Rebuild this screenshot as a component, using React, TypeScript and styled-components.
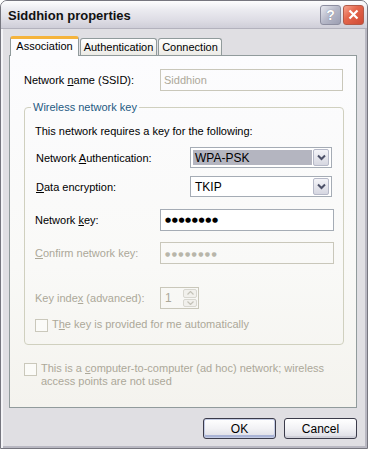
import React from "react";
import styled, { createGlobalStyle, css } from "styled-components";

const Global = createGlobalStyle`
  html, body {
    margin: 0;
    padding: 0;
    background: #ffffff;
  }
  * {
    box-sizing: border-box;
  }
`;

const FONT = `"Liberation Sans", Arial, sans-serif`;
const DISABLED = "#aca899";

const Window = styled.div`
  width: 368px;
  height: 449px;
  background: #e0dfe3;
  border: 1px solid #76767f;
  border-radius: 7px 7px 0 0;
  box-shadow: inset 2px 0 0 #f4f4f7, inset -2px 0 0 #b9b8c2, inset 0 -2px 0 #b9b8c2;
  display: flex;
  flex-direction: column;
  overflow: hidden;
  font-family: ${FONT};
  font-size: 11px;
  color: #000;
`;

const TitleBar = styled.div`
  height: 28px;
  flex: none;
  display: flex;
  align-items: center;
  padding: 0 3px 0 7px;
  background: linear-gradient(#fdfdfe 0%, #ececf1 30%, #dedde5 70%, #cfced8 100%);
  border-bottom: 1px solid #b3b2bd;
`;

const Title = styled.div`
  flex: 1;
  font-family: ${FONT};
  font-weight: bold;
  font-size: 13px;
  color: #111;
  padding-top: 1px;
`;

const CaptionButton = styled.div<{ $close?: boolean }>`
  width: 21px;
  height: 20px;
  margin-left: 2px;
  border-radius: 3px;
  border: 1px solid ${(p) => (p.$close ? "#b25a48" : "#8d8ea0")};
  display: flex;
  align-items: center;
  justify-content: center;
  color: #fff;
  ${(p) =>
    p.$close
      ? css`
          background: linear-gradient(135deg, #f7a48f 0%, #e4664c 40%, #cf4a35 100%);
        `
      : css`
          background: linear-gradient(135deg, #e8e9f0 0%, #b6b8c8 50%, #9c9eb2 100%);
          font-weight: bold;
          font-size: 14px;
          text-shadow: 0 0 1px #6c6e80;
        `}
`;

const Body = styled.div`
  flex: 1;
  display: flex;
  flex-direction: column;
  padding: 7px 10px 0 8px;
`;

const TabStrip = styled.div`
  display: flex;
  align-items: flex-end;
  padding-left: 1px;
  height: 19px;
`;

const Tab = styled.div<{ $w: number; $active?: boolean }>`
  width: ${(p) => p.$w}px;
  display: flex;
  align-items: center;
  justify-content: center;
  border: 1px solid #919b9c;
  border-bottom: none;
  border-radius: 3px 3px 0 0;
  margin-right: 1px;
  ${(p) =>
    p.$active
      ? css`
          height: 20px;
          margin-bottom: -1px;
          padding-bottom: 3px;
          background: #fcfcfe;
          border-top: 3px solid #f5b43c;
          position: relative;
          z-index: 1;
        `
      : css`
          height: 17px;
          background: linear-gradient(#ffffff, #ecebe6);
        `}
`;

const Panel = styled.div`
  height: 353px;
  border: 1px solid #919b9c;
  background: linear-gradient(#fcfcfe 0%, #f9f9f7 60%, #f4f3ee 100%);
  padding: 13px 13px 0 14px;
  display: flex;
  flex-direction: column;
`;

const Row = styled.div<{ $top?: number }>`
  display: flex;
  align-items: center;
  margin-top: ${(p) => p.$top ?? 0}px;
`;

const Label = styled.div<{ $disabled?: boolean; $indent?: number }>`
  flex: 1;
  padding-left: ${(p) => p.$indent ?? 0}px;
  color: ${(p) => (p.$disabled ? DISABLED : "#000")};
  white-space: nowrap;
`;

const U = styled.span`
  text-decoration: underline;
  text-underline-offset: 1px;
`;

const Field = styled.div<{ $w: number; $disabled?: boolean; $h?: number }>`
  width: ${(p) => p.$w}px;
  height: ${(p) => p.$h ?? 22}px;
  border: 1px solid ${(p) => (p.$disabled ? "#c9c7ba" : "#a5acb5")};
  background: ${(p) => (p.$disabled ? "transparent" : "#ffffff")};
  color: ${(p) => (p.$disabled ? DISABLED : "#000")};
  display: flex;
  align-items: center;
  padding-left: 3px;
`;

const Dots = styled.span<{ $disabled?: boolean }>`
  font-family: "DejaVu Sans", sans-serif;
  font-size: ${(p) => (p.$disabled ? 6 : 7)}px;
  letter-spacing: ${(p) => (p.$disabled ? 1.4 : 0.6)}px;
  color: ${(p) => (p.$disabled ? "#b8b6aa" : "#000")};
  padding-left: 1px;
`;

const Group = styled.fieldset`
  margin: 10px 0 0 0;
  padding: 0 9px 12px 10px;
  border: 1px solid #d0d0bf;
  border-radius: 4px;
  width: 320px;
`;

const Legend = styled.legend`
  color: #1f5a82;
  padding: 0 2px;
  margin-left: -4px;
  line-height: 13px;
`;

const Text = styled.div<{ $top?: number }>`
  margin-top: ${(p) => p.$top ?? 0}px;
  line-height: 13px;
  padding-left: 0;
`;

const Select = styled.div<{ $w: number }>`
  width: ${(p) => p.$w}px;
  height: 21px;
  margin-right: 2px;
  border: 1px solid #a5acb5;
  background: #fff;
  display: flex;
  padding: 2px;
`;

const SelectValue = styled.div<{ $selected?: boolean }>`
  flex: 1;
  display: flex;
  align-items: center;
  padding-left: 2px;
  font-size: 12px;
  background: ${(p) => (p.$selected ? "#b4b5c0" : "transparent")};
  color: #000;
`;

const DropButton = styled.div`
  width: 16px;
  margin-left: 1px;
  margin-top: -1px;
  margin-bottom: -1px;
  border: 1px solid #b6b9c8;
  border-radius: 2px;
  background: linear-gradient(#f4f4f8, #d6d7e1);
  display: flex;
  align-items: center;
  justify-content: center;
`;

const Spin = styled.div`
  width: 39px;
  height: 22px;
  border: 1px solid #c9c7ba;
  display: flex;
  align-items: stretch;
  color: ${DISABLED};
`;

const SpinText = styled.div`
  flex: 1;
  display: flex;
  align-items: center;
  padding-left: 4px;
  font-size: 12px;
`;

const SpinButtons = styled.div`
  width: 15px;
  display: flex;
  flex-direction: column;
  padding: 1px 1px 1px 0;
  gap: 1px;
`;

const SpinHalf = styled.div`
  flex: 1;
  border: 1px solid #d8d7d0;
  border-radius: 2px;
  background: #f1f0ec;
  display: flex;
  align-items: center;
  justify-content: center;
`;

const Spacer = styled.div<{ $w: number }>`
  width: ${(p) => p.$w}px;
`;

const CheckRow = styled.div<{ $top?: number }>`
  display: flex;
  align-items: flex-start;
  margin-top: ${(p) => p.$top ?? 0}px;
  color: ${DISABLED};
  line-height: 13px;
`;

const CheckBox = styled.div`
  width: 13px;
  height: 13px;
  flex: none;
  border: 1px solid #cac8bb;
  background: #fbfbf8;
  margin-right: 4px;
  margin-top: 1px;
`;

const Footer = styled.div`
  display: flex;
  justify-content: flex-end;
  gap: 8px;
  margin-top: 10px;
`;

const Button = styled.div<{ $default?: boolean }>`
  width: 73px;
  height: 21px;
  border: 1px solid #3b3b4a;
  border-radius: 3px;
  display: flex;
  align-items: center;
  justify-content: center;
  font-size: 12px;
  background: linear-gradient(#ffffff 0%, #f2f2f5 50%, #dcdce4 100%);
  box-shadow: ${(p) =>
    p.$default
      ? "inset 0 0 0 1px #c3cbe4, inset 0 -2px 0 1px #aab4d6"
      : "inset 0 -2px 0 #cfcfd8"};
`;

const Chevron = () => (
  <svg width="9" height="7" viewBox="0 0 9 7">
    <path d="M1 1.5 L4.5 5 L8 1.5" fill="none" stroke="#4d5168" strokeWidth="2" />
  </svg>
);

const SpinArrow = ({ up }: { up?: boolean }) => (
  <svg width="7" height="4" viewBox="0 0 7 4">
    <path
      d={up ? "M0.5 3.5 L3.5 0.5 L6.5 3.5" : "M0.5 0.5 L3.5 3.5 L6.5 0.5"}
      fill="none"
      stroke="#c4c2b8"
      strokeWidth="1.2"
    />
  </svg>
);

export default function App() {
  return (
    <>
      <Global />
      <Window>
        <TitleBar>
          <Title>Siddhion properties</Title>
          <CaptionButton>?</CaptionButton>
          <CaptionButton $close>
            <svg width="11" height="11" viewBox="0 0 11 11">
              <path d="M1.5 1.5 L9.5 9.5 M9.5 1.5 L1.5 9.5" stroke="#fff" strokeWidth="2.2" />
            </svg>
          </CaptionButton>
        </TitleBar>
        <Body>
          <TabStrip>
            <Tab $w={69} $active>
              Association
            </Tab>
            <Tab $w={77}>Authentication</Tab>
            <Tab $w={64}>Connection</Tab>
          </TabStrip>
          <Panel>
            <Row>
              <Label>
                Network <U>n</U>ame (SSID):
              </Label>
              <Field $w={183} $disabled>
                Siddhion
              </Field>
            </Row>

            <Group>
              <Legend>Wireless network key</Legend>
              <Text $top={11}>This network requires a key for the following:</Text>
              <Row $top={9}>
                <Label $indent={1}>
                  Network <U>A</U>uthentication:
                </Label>
                <Select $w={142}>
                  <SelectValue $selected>WPA-PSK</SelectValue>
                  <DropButton>
                    <Chevron />
                  </DropButton>
                </Select>
              </Row>
              <Row $top={8}>
                <Label $indent={1}>
                  <U>D</U>ata encryption:
                </Label>
                <Select $w={142}>
                  <SelectValue>TKIP</SelectValue>
                  <DropButton>
                    <Chevron />
                  </DropButton>
                </Select>
              </Row>
              <Row $top={12}>
                <Label>
                  Network <U>k</U>ey:
                </Label>
                <Field $w={174}>
                  <Dots>●●●●●●●●</Dots>
                </Field>
              </Row>
              <Row $top={11}>
                <Label $disabled>
                  <U>C</U>onfirm network key:
                </Label>
                <Field $w={174} $disabled>
                  <Dots $disabled>●●●●●●●●</Dots>
                </Field>
              </Row>
              <Row $top={23}>
                <Label $disabled>
                  Key inde<U>x</U> (advanced):
                </Label>
                <Spin>
                  <SpinText>1</SpinText>
                  <SpinButtons>
                    <SpinHalf>
                      <SpinArrow up />
                    </SpinHalf>
                    <SpinHalf>
                      <SpinArrow />
                    </SpinHalf>
                  </SpinButtons>
                </Spin>
                <Spacer $w={135} />
              </Row>
              <CheckRow $top={9}>
                <CheckBox />
                <span>
                  T<U>h</U>e key is provided for me automatically
                </span>
              </CheckRow>
            </Group>

            <CheckRow $top={17}>
              <CheckBox />
              <span>
                This is a <U>c</U>omputer-to-computer (ad hoc) network; wireless
                <br />
                access points are not used
              </span>
            </CheckRow>
          </Panel>
          <Footer>
            <Button $default>OK</Button>
            <Button>Cancel</Button>
          </Footer>
        </Body>
      </Window>
    </>
  );
}
